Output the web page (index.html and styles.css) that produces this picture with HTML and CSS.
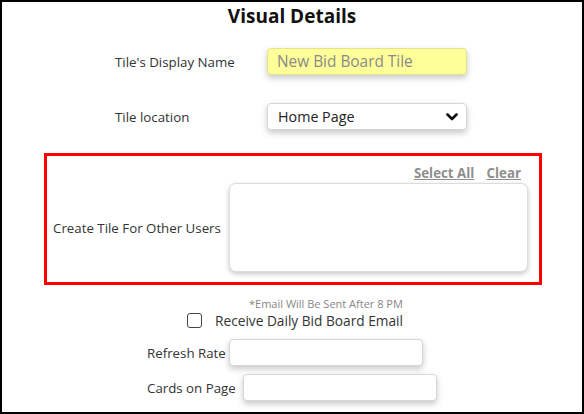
FILE: index.html
```html
<!DOCTYPE html>
<html lang="en">
<head>
  <meta charset="UTF-8" />
  <meta name="viewport" content="width=device-width, initial-scale=1.0" />
  <title>Visual Details</title>
  <link rel="stylesheet" href="styles.css">
</head>
<body>
  <div class="painel">
    <h1 class="titulo">Visual Details</h1>

    <div class="linha">
      <label class="rotulo" for="nomeTile">Tile's Display Name</label>
      <input class="campo campo-nome" id="nomeTile" type="text" placeholder="New Bid Board Tile" autofocus />
    </div>

    <div class="linha linha-local">
      <label class="rotulo" for="localTile">Tile location</label>
      <div class="select-box">
        <select class="campo campo-select" id="localTile">
          <option>Home Page</option>
          <option>Bid Board</option>
        </select>
        <svg class="seta" width="12" height="8" viewBox="0 0 12 8">
          <path d="M1.5 1.5 L6 6 L10.5 1.5" fill="none" stroke="#111" stroke-width="2.6" stroke-linecap="round" stroke-linejoin="round" />
        </svg>
      </div>
    </div>

    <div class="usuarios">
      <div class="acoes">
        <a href="#">Select All</a>
        <a href="#">Clear</a>
      </div>
      <div class="usuarios-linha">
        <span class="rotulo">Create Tile For Other Users</span>
        <textarea class="lista-usuarios"></textarea>
      </div>
    </div>

    <p class="aviso">*Email Will Be Sent After 8 PM</p>
    <label class="checkbox-linha">
      <input type="checkbox" class="check" />
      <span>Receive Daily Bid Board Email</span>
    </label>

    <div class="linha-simples">
      <label class="rotulo" for="refresh">Refresh Rate</label>
      <input class="campo campo-curto" id="refresh" type="text" />
    </div>
    <div class="linha-simples linha-cards">
      <label class="rotulo" for="cards">Cards on Page</label>
      <input class="campo campo-curto" id="cards" type="text" />
    </div>
  </div>
</body>
</html>
```

FILE: styles.css
```css
* {
  box-sizing: border-box;
  margin: 0;
  padding: 0;
}
body {
  font-family: 'Open Sans', 'Liberation Sans', sans-serif;
  color: #333;
  background: #fff;
}
.painel {
  width: 584px;
  height: 414px;
  border: 2px solid #000;
  overflow: hidden;
}
.titulo {
  font-size: 19px;
  line-height: 26px;
  font-weight: 700;
  color: #111;
  text-align: center;
  padding-top: 1px;
}
.rotulo {
  font-size: 13.3px;
  color: #333;
  white-space: nowrap;
}
.linha {
  display: flex;
  align-items: center;
  padding-left: 113px;
  margin-top: 19px;
  height: 27px;
}
.linha .rotulo {
  width: 152px;
}
.linha-local {
  margin-top: 28px;
}
.campo {
  font-family: inherit;
  height: 27px;
  border: 1px solid #d6d6d6;
  border-radius: 4px;
  background: #fff;
  box-shadow: 0 3px 6px rgba(0,0,0,0.22);
  outline: none;
  flex-shrink: 0;
}
.campo-nome {
  width: 200px;
  background: #ffff99;
  border-color: #e4e48c;
  font-size: 15.4px;
  padding: 0 9px;
  caret-color: #000;
}
.campo-nome::placeholder {
  color: #8a8a8a;
}
.select-box {
  position: relative;
  width: 200px;
}
.campo-select {
  width: 200px;
  appearance: none;
  font-size: 14.3px;
  color: #222;
  padding: 0 10px;
}
.seta {
  position: absolute;
  right: 9px;
  top: 10px;
}
.usuarios {
  margin: 23px 0 0 42px;
  width: 498px;
  height: 132px;
  border: 3px solid #f00;
  padding: 7px 12px 0 6px;
}
.acoes {
  text-align: right;
  line-height: 18px;
  padding-right: 6px;
}
.acoes a {
  font-size: 13.3px;
  font-weight: 700;
  color: #8e8e8e;
  margin-left: 8px;
}
.usuarios-linha {
  display: flex;
  align-items: center;
  gap: 8px;
  margin-top: 1px;
}
.lista-usuarios {
  width: 299px;
  height: 89px;
  flex-shrink: 0;
  border: 1px solid #ddd;
  border-radius: 7px;
  box-shadow: 0 2px 5px rgba(0,0,0,0.22);
  resize: none;
  margin-left: auto;
}
.aviso {
  font-size: 11px;
  line-height: 14px;
  color: #888;
  margin: 12px 0 0 247px;
}
.checkbox-linha {
  display: flex;
  align-items: center;
  gap: 13px;
  height: 18px;
  margin-left: 185px;
  font-size: 13.7px;
  color: #333;
}
.check {
  appearance: none;
  width: 15px;
  height: 15px;
  border: 1.5px solid #444;
  border-radius: 3px;
  background: #fff;
}
.linha-simples {
  display: flex;
  align-items: center;
  gap: 3px;
  margin: 10px 0 0 145px;
}
.linha-cards {
  margin-top: 8px;
  gap: 7px;
}
.campo-curto {
  width: 194px;
}
```
